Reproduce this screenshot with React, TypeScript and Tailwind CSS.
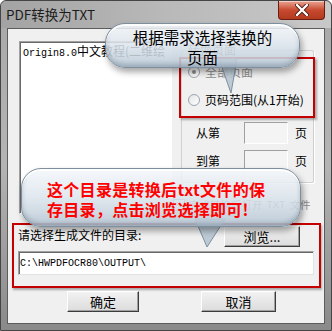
import React from 'react';

const cjk = '"Noto Sans CJK SC", "Liberation Sans", sans-serif';
const mono = '"Liberation Mono", "Noto Sans CJK SC", monospace';

function Btn({ label, className = '' }: { label: string; className?: string }) {
  return (
    <div
      className={`flex items-center justify-center h-[21px] bg-gradient-to-b from-[#f2f2f2] to-[#dcdcdc] border border-t-white border-l-white border-b-[#3c3c3c] border-r-[#3c3c3c] shadow-[inset_-1px_-1px_0_#a0a0a0] text-[13px] text-black ${className}`}
    >
      {label}
    </div>
  );
}

function Radio({ checked }: { checked?: boolean }) {
  return (
    <span className="w-[12px] h-[12px] rounded-full border border-[#9aa4ad] bg-gradient-to-br from-[#e4e4e4] to-white flex items-center justify-center">
      {checked && <span className="w-[4px] h-[4px] rounded-full bg-[#8a8a8a]" />}
    </span>
  );
}

function Bubble({ className, children }: { className: string; children: React.ReactNode }) {
  return (
    <div
      className={`absolute rounded-[20px] border border-[#7d8f9f] bg-gradient-to-b from-[#f4f7fa]/85 via-[#dbe4ec]/85 to-[#b9c8d5]/90 shadow-[2px_4px_6px_rgba(0,0,0,0.35),inset_0_2px_0_rgba(255,255,255,0.9),inset_0_-3px_4px_rgba(90,110,130,0.35)] ${className}`}
    >
      {children}
    </div>
  );
}

export default function App() {
  return (
    <div
      className="relative w-[332px] h-[331px] bg-gradient-to-b from-[#a8a8a8] via-[#b4b4b4] to-[#8a8a8a] border border-[#454545] rounded-t-[6px] flex flex-col"
      style={{ fontFamily: cjk }}
    >
      {/* title bar */}
      <div className="h-[27px] flex items-start bg-gradient-to-r from-[#a3a3a3] via-[#b9b9b9] to-[#c8c8c8] rounded-t-[6px]">
        <span className="pl-[5px] pt-[5px] text-[13.5px] text-[#1c1c1c] leading-[16px]">PDF转换为TXT</span>
        <div className="ml-auto mr-[6px] w-[47px] h-[19px] rounded-b-[4px] border border-t-0 border-[#6b1d10] bg-gradient-to-b from-[#e8a493] via-[#c8492f] to-[#b23a1f] shadow-[inset_0_1px_0_rgba(255,255,255,0.5)] flex items-center justify-center">
          <svg width="14" height="12" viewBox="0 0 14 12">
            <path d="M2 1 L12 11 M12 1 L2 11" stroke="#4a1a10" strokeWidth="4" strokeLinecap="round" />
            <path d="M2 1 L12 11 M12 1 L2 11" stroke="#ffffff" strokeWidth="2.4" strokeLinecap="round" />
          </svg>
        </div>
      </div>

      {/* client area */}
      <div className="mx-[6px] h-[296px] bg-[#f0f0f0] border border-[#5c5c5c] flex flex-col">
        <div className="flex pt-[12px] pl-[11px] h-[185px]">
          {/* list box */}
          <div className="w-[153px] h-[173px] bg-white border border-t-[#a0a0a0] border-l-[#a0a0a0] border-b-white border-r-white shadow-[inset_1px_1px_0_#696969] pl-[3px] pt-[2px] overflow-hidden">
            <div className="text-[12px] leading-[14px] text-black whitespace-nowrap">
              <span className="text-[10px]" style={{ fontFamily: mono }}>Origin8.0</span>中文教程(二维绘
            </div>
          </div>

          {/* right column */}
          <div className="ml-[9px] flex flex-col">
            <div className="relative mt-[9px] w-[133px] h-[133px] border border-[#d0d0d0] shadow-[1px_1px_0_white] rounded-[2px] text-[12px] text-black">
              <span className="absolute left-[5px] top-[-8px] bg-[#f0f0f0] px-[1px] text-[#6d6d6d] leading-[14px]">转换页面</span>
              <div className="flex flex-col pl-[6px]">
                <div className="mt-[14px] flex items-center gap-[5px] text-[#8c8c8c] leading-[14px]">
                  <Radio checked />
                  全部页面
                </div>
                <div className="mt-[14px] flex items-center gap-[5px] leading-[14px]">
                  <Radio />
                  页码范围(从1开始)
                </div>
                <div className="mt-[15px] flex items-center pl-[8px]">
                  <span className="w-[48px]">从第</span>
                  <span className="w-[44px] h-[22px] border border-t-[#a0a0a0] border-l-[#a0a0a0] border-b-white border-r-white bg-[#f4f4f4]" />
                  <span className="ml-[7px]">页</span>
                </div>
                <div className="mt-[6px] flex items-center pl-[8px]">
                  <span className="w-[48px]">到第</span>
                  <span className="w-[44px] h-[22px] border border-t-[#a0a0a0] border-l-[#a0a0a0] border-b-white border-r-white bg-[#f4f4f4]" />
                  <span className="ml-[7px]">页</span>
                </div>
              </div>
              {/* red annotation box */}
              <div className="absolute left-[-3px] top-[6px] w-[136px] h-[61px] border-2 border-[#c40000] shadow-[2px_2px_2px_rgba(0,0,0,0.3)]" />
            </div>
            <div className="mt-[15px] -ml-[8px] flex items-center gap-[4px] text-[10.5px] text-[#8c8c8c] leading-[14px] whitespace-nowrap">
              <span className="w-[12px] h-[12px] border border-[#9aa4ad] bg-white" />
              完成转换后打开<span style={{ fontFamily: mono }}>TXT</span>文件
            </div>
          </div>
        </div>

        {/* directory section, red annotation */}
        <div className="ml-[4px] mt-[9px] w-[309px] h-[65px] border-2 border-[#c40000] shadow-[1px_2px_2px_rgba(0,0,0,0.3)] flex flex-col px-[4px]">
          <div className="flex items-start justify-between h-[26px]">
            <span className="pt-[3px] text-[12px] leading-[14px] text-black">请选择生成文件的目录:</span>
            <Btn label="浏览..." className="w-[76px] mr-[15px] mt-[1px]" />
          </div>
          <div className="w-[296px] h-[24px] bg-white border border-t-[#a0a0a0] border-l-[#a0a0a0] border-b-[#e3e3e3] border-r-[#e3e3e3] shadow-[inset_1px_1px_0_#696969] flex items-center pl-[1px]">
            <span className="text-[10px] text-black" style={{ fontFamily: mono }}>C:\HWPDFOCR80\OUTPUT\</span>
          </div>
        </div>

        <div className="flex mt-[3px]">
          <Btn label="确定" className="ml-[59px] w-[72px]" />
          <Btn label="取消" className="ml-[62px] w-[75px]" />
        </div>
      </div>

      {/* callout: top */}
      <svg className="absolute left-[214px] top-[56px]" width="30" height="40" viewBox="0 0 30 40">
        <path d="M4 2 L22 2 L16 36 Z" fill="#b7c5d1" fillOpacity="0.9" stroke="#7d8f9f" strokeWidth="1" />
      </svg>
      <Bubble className="left-[104px] top-[22px] w-[195px] h-[45px]">
        <div className="text-center text-[15.5px] leading-[20px] text-black pt-[3px]">
          根据需求选择装换的
          <br />
          页面
        </div>
      </Bubble>

      {/* callout: bottom */}
      <svg className="absolute left-[190px] top-[216px]" width="40" height="34" viewBox="0 0 40 34">
        <path d="M4 2 L34 2 L16 30 Z" fill="#b7c5d1" fillOpacity="0.9" stroke="#7d8f9f" strokeWidth="1" />
      </svg>
      <Bubble className="left-[20px] top-[167px] w-[280px] h-[59px]">
        <div className="pl-[25px] pt-[10px] text-[16px] leading-[20px] font-bold text-[#ff0000] tracking-[0.3px] whitespace-nowrap">
          这个目录是转换后txt文件的保
          <br />
          存目录，点击浏览选择即可!
        </div>
      </Bubble>
    </div>
  );
}
